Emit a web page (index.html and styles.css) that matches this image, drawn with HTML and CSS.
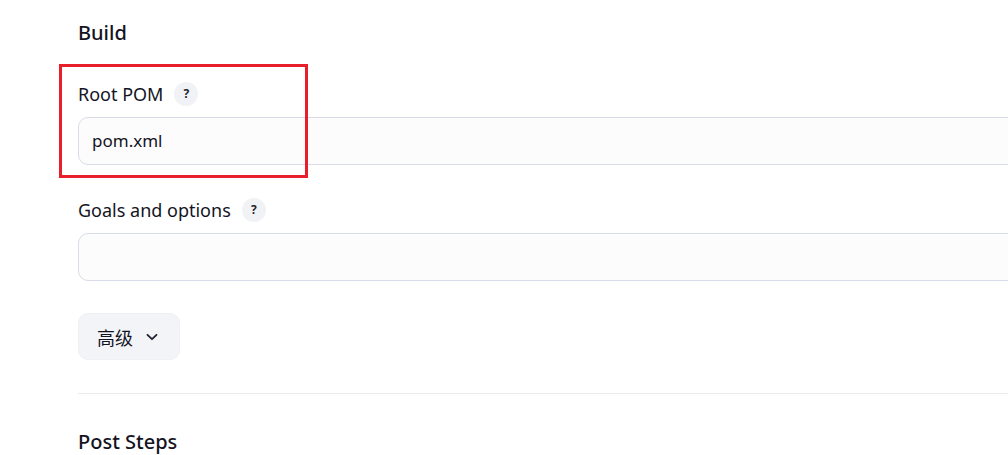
FILE: index.html
```html
<!DOCTYPE html>
<html lang="zh">
<head>
<meta charset="utf-8">
<link rel="stylesheet" href="styles.css">
</head>
<body>
<div class="page">
  <section class="section">
    <h2 class="section-title">Build</h2>
    <div class="field field-first">
      <div class="field-label">
        <span>Root POM</span>
        <span class="help">?</span>
      </div>
      <div class="input">pom.xml</div>
    </div>
    <div class="field">
      <div class="field-label">
        <span>Goals and options</span>
        <span class="help">?</span>
      </div>
      <div class="input"></div>
    </div>
    <button class="advanced">
      <span>高级</span>
      <svg class="chev" width="12" height="8" viewBox="0 0 12 8"><path d="M1.5 1.8 L6 6.2 L10.5 1.8" fill="none" stroke="#1f2430" stroke-width="1.8" stroke-linecap="round" stroke-linejoin="round"/></svg>
    </button>
  </section>
  <hr class="divider">
  <h2 class="section-title">Post Steps</h2>
  <div class="highlight"></div>
</div>
</body>
</html>
```

FILE: styles.css
```css
html, body {
  margin: 0;
  padding: 0;
  background: #ffffff;
  overflow: hidden;
}
body {
  font-family: "Noto Sans", "Noto Sans CJK SC", sans-serif;
  color: #14141f;
}
.page {
  position: relative;
  width: 1100px;
  padding: 19px 0 0 78px;
}
.section-title {
  margin: 0;
  font-size: 20px;
  font-weight: 500;
  line-height: 28px;
}
.field {
  margin-top: 33px;
}
.field-first {
  margin-top: 35px;
}
.field-label {
  display: flex;
  align-items: center;
  gap: 11px;
  font-size: 18px;
  line-height: 24px;
  height: 24px;
}
.help {
  width: 24px;
  height: 24px;
  border-radius: 50%;
  background: #f0f2f5;
  font-size: 12px;
  font-weight: 700;
  display: flex;
  align-items: center;
  justify-content: center;
  color: #1f2430;
}
.input {
  margin-top: 11px;
  height: 46px;
  border: 1px solid #d8dce8;
  border-radius: 10px;
  background: #fcfcfd;
  box-sizing: content-box;
  padding: 0 13px;
  font-size: 17px;
  line-height: 46px;
}
.advanced {
  margin-top: 32px;
  display: flex;
  align-items: center;
  gap: 13px;
  height: 47px;
  padding: 0 21px 0 18px;
  border: 1px solid #eef0f4;
  border-radius: 10px;
  background: #f2f4f7;
  font-family: "Noto Sans CJK SC", sans-serif;
  font-size: 18px;
  color: #14141f;
}
.divider {
  margin: 33px 0 34px 0;
  border: 0;
  border-top: 1px solid #ebebeb;
  height: 0;
}
.highlight {
  position: absolute;
  left: 59px;
  top: 64px;
  width: 243px;
  height: 108px;
  border: 3px solid #e81e2a;
}
```
